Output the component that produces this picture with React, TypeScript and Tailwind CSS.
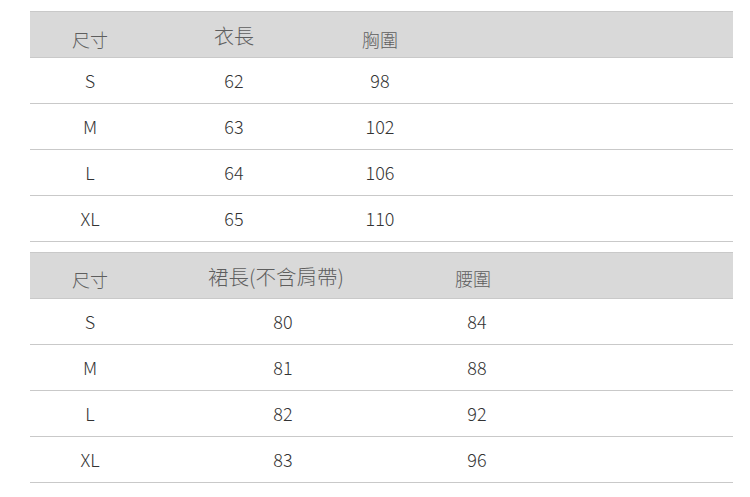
const font = { fontFamily: '"Noto Sans CJK TC", "Noto Sans", sans-serif' }

interface Header {
  label: string
  className: string
}

interface SizeTableProps {
  headers: Header[]
  rows: string[][]
  cols: string
}

function SizeTable({ headers, rows, cols }: SizeTableProps) {
  return (
    <div className="w-[703px] border-t border-[#c9c9c9]">
      <div className={`grid ${cols} h-[46px] items-center bg-[#d9d9d9] border-b border-[#c9c9c9] text-[#5e5e5e] font-light`}>
        {headers.map((h, i) => (
          <div key={i} className={`text-center leading-none ${h.className}`}>
            {h.label}
          </div>
        ))}
        <div />
      </div>
      {rows.map((row, r) => (
        <div
          key={r}
          className={`grid ${cols} h-[46px] items-center border-b border-[#c9c9c9] text-[18px] text-[#333] font-light`}
        >
          {row.map((cell, i) => (
            <div key={i} className="text-center">
              {cell}
            </div>
          ))}
          <div />
        </div>
      ))}
    </div>
  )
}

export default function App() {
  return (
    <div className="w-[750px] h-[497px] bg-white pt-[11px] pl-[30px]" style={font}>
      <SizeTable
        cols="grid-cols-[120px_168px_124px_1fr]"
        headers={[
          { label: '尺寸', className: 'text-[18px] mt-[8px]' },
          { label: '衣長', className: 'text-[20px] mt-[2px]' },
          { label: '胸圍', className: 'text-[18px] mt-[8px]' },
        ]}
        rows={[
          ['S', '62', '98'],
          ['M', '63', '102'],
          ['L', '64', '106'],
          ['XL', '65', '110'],
        ]}
      />
      <div className="h-[10px]" />
      <SizeTable
        cols="grid-cols-[120px_266px_122px_1fr]"
        headers={[
          { label: '尺寸', className: 'text-[18px] mt-[7px]' },
          { label: '裙長(不含肩帶)', className: 'text-[20.5px] mt-[2px] -ml-[14px]' },
          { label: '腰圍', className: 'text-[18px] mt-[5px] -ml-[8px]' },
        ]}
        rows={[
          ['S', '80', '84'],
          ['M', '81', '88'],
          ['L', '82', '92'],
          ['XL', '83', '96'],
        ]}
      />
    </div>
  )
}
